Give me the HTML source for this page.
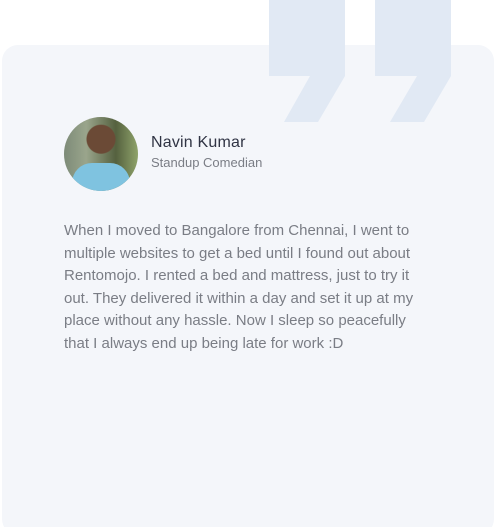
<!DOCTYPE html>
<html><head><style>
html,body{margin:0;padding:0;background:#fff;width:495px;height:527px;overflow:hidden;position:relative;font-family:"Liberation Sans",sans-serif}
.card{position:absolute;left:2px;top:45px;width:492px;height:490px;background:#f4f6fa;border-radius:16px}
svg.q{position:absolute;left:0;top:0}
.av{position:absolute;left:64px;top:117px;width:74px;height:74px;border-radius:50%;overflow:hidden;background:radial-gradient(circle at 50% 30%,#6b4a36 0 14px,transparent 15px),linear-gradient(90deg,#7d8b78 0%,#9aa58c 30%,#55613f 70%,#8fa36a 100%)}
.av:after{content:"";position:absolute;left:8px;top:46px;width:58px;height:40px;border-radius:20px 20px 0 0;background:#7fc3e0}
.name{position:absolute;left:151px;top:134px;font-size:16px;color:#303444;letter-spacing:.2px}
.role{position:absolute;left:151px;top:155px;font-size:13px;color:#7a7d85}
.txt{position:absolute;left:64px;top:220px;width:362px;font-size:15px;line-height:22.6px;color:#7a7d85}
</style></head><body>
<div class="card"></div>
<svg class="q" width="495" height="130">
<polygon points="269,0 345,0 345,76 318,122 284,122 310,76 269,76" fill="#e1e9f4"/>
<polygon points="375,0 451,0 451,76 424,122 390,122 417,76 375,76" fill="#e1e9f4"/>
</svg>
<div class="av"></div>
<div class="name">Navin Kumar</div>
<div class="role">Standup Comedian</div>
<div class="txt">When I moved to Bangalore from Chennai, I went to multiple websites to get a bed until I found out about Rentomojo. I rented a bed and mattress, just to try it out. They delivered it within a day and set it up at my place without any hassle. Now I sleep so peacefully that I always end up being late for work :D</div>
</body></html>
